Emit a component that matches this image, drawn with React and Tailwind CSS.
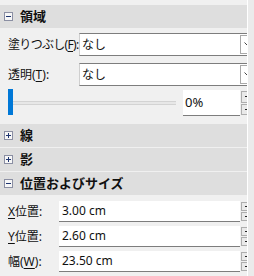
import React from "react";

const U = ({ c }) => <span className="underline underline-offset-[2px] decoration-1">{c}</span>;

function Box({ open }) {
  return (
    <svg width="9" height="9" viewBox="0 0 9 9" className="block shrink-0">
      <rect x="0.5" y="0.5" width="8" height="8" fill="#f7f7f7" stroke="#8b8fa3" />
      <path d="M2 4.5h5" stroke="#1f3570" strokeWidth="1" />
      {!open && <path d="M4.5 2v5" stroke="#1f3570" strokeWidth="1" />}
    </svg>
  );
}

function Header({ title, open }) {
  return (
    <div className="h-[23px] bg-[#dedede] flex items-center pl-[4px]">
      <Box open={open} />
      <span className="ml-[7px] text-[13px] leading-none font-bold text-[#111]">{title}</span>
    </div>
  );
}

function Spin({ h }) {
  return (
    <div className="ml-[1px] w-[12px] flex flex-col gap-[1px] shrink-0" style={{ height: h }}>
      <div className="flex-1 border border-[#adadad] bg-[#e9e9e9] flex items-center pl-[3px]">
        <div className="w-[4px] h-[1px] bg-[#222]" />
      </div>
      <div className="flex-1 border border-[#adadad] bg-[#e9e9e9] flex items-center pl-[3px]">
        <div className="w-[4px] h-[1px] bg-[#222]" />
      </div>
    </div>
  );
}

function Combo({ label, value, tight }) {
  return (
    <div className="h-[23px] flex items-center">
      <div
        className={
          tight
            ? "w-[79px] shrink-0 pl-[8px] text-[12px] leading-none text-[#111] tracking-[-0.7px] whitespace-nowrap"
            : "w-[79px] shrink-0 pl-[8px] text-[12px] leading-none text-[#111] whitespace-nowrap"
        }
      >
        {label}
      </div>
      <div className="h-[23px] w-[181px] shrink-0 flex bg-white border-y border-[#7d7d7d] border-l border-l-[#cfcfcf]">
        <div className="w-[160px] shrink-0 pl-[2px] flex items-center text-[12px] leading-none text-[#111]">{value}</div>
        <div className="my-[1px] w-[14px] shrink-0 border border-[#a9a9a9] bg-white flex items-center pl-[3px]">
          <svg width="7" height="5" viewBox="0 0 7 5" className="block">
            <path d="M0.5 0.5l3 3l3-3" fill="none" stroke="#444" strokeWidth="1" />
          </svg>
        </div>
      </div>
    </div>
  );
}

function Field({ label, value }) {
  return (
    <div className="h-[21px] flex items-center">
      <div className="w-[59px] shrink-0 pl-[8px] text-[12px] leading-none text-[#111] whitespace-nowrap">{label}</div>
      <div className="h-[21px] w-[181px] shrink-0 bg-white border-b border-[#7d7d7d] flex items-center pl-[3px] text-[12px] leading-none text-[#111]">
        {value}
      </div>
      <Spin h={19} />
    </div>
  );
}

export default function App() {
  return (
    <div
      className="w-[254px] h-[276px] flex bg-[#f0f0f0] overflow-hidden"
      style={{ fontFamily: "'Noto Sans', 'Noto Sans CJK JP', sans-serif" }}
    >
      <div className="w-[247px] shrink-0 overflow-hidden pt-[5px]">
        <Header title="領域" open />
        <div className="mt-[5px] flex flex-col gap-[7px]">
          <Combo tight label={<>塗りつぶし(<U c="F" />):</>} value="なし" />
          <Combo label={<>透明(<U c="T" />):</>} value="なし" />
        </div>
        <div className="mt-[3px] h-[27px] flex items-start">
          <div className="ml-[8px] w-[5px] h-[26px] bg-[#0078d7] shrink-0" />
          <div className="mt-[12px] w-[163px] h-[4px] bg-[#e7e7e7] border-y border-[#d3d3d3] shrink-0" />
          <div className="ml-[7px] mt-[1px] h-[26px] w-[57px] shrink-0 bg-white border-b border-[#7d7d7d] flex items-center pl-[2px] text-[13px] leading-none text-[#111]">
            0%
          </div>
          <div className="mt-[2px] shrink-0">
            <Spin h={24} />
          </div>
        </div>
        <div className="mt-[8px] flex flex-col gap-[1px]">
          <Header title="線" />
          <Header title="影" />
          <Header title="位置およびサイズ" open />
        </div>
        <div className="mt-[6px] flex flex-col gap-[4px]">
          <Field label={<><U c="X" />位置:</>} value="3.00 cm" />
          <Field label={<><U c="Y" />位置:</>} value="2.60 cm" />
          <Field label={<>幅(<U c="W" />):</>} value="23.50 cm" />
        </div>
      </div>
      <div className="w-[7px] shrink-0 border-l border-white bg-[#ebebeb]" />
    </div>
  );
}
